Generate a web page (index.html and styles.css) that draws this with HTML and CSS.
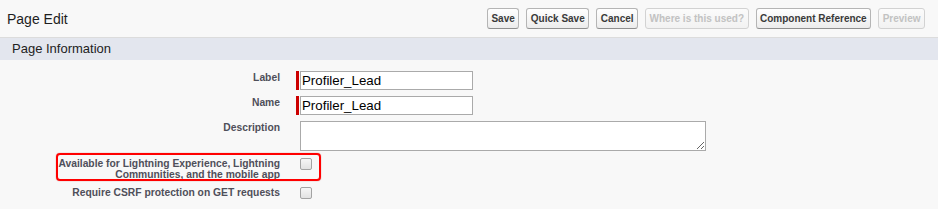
FILE: index.html
```html
<!DOCTYPE html>
<html>
<head>
<meta charset="utf-8">
<title>Page Edit</title>
<link rel="stylesheet" href="styles.css">
</head>
<body>
<div class="page">
  <header class="page-header">
    <h1 class="page-title">Page Edit</h1>
    <div class="btn-row">
      <button class="btn">Save</button>
      <button class="btn">Quick Save</button>
      <button class="btn">Cancel</button>
      <button class="btn" disabled>Where is this used?</button>
      <button class="btn">Component Reference</button>
      <button class="btn" disabled>Preview</button>
    </div>
  </header>
  <div class="section-head">Page Information</div>
  <div class="form">
    <div class="lbl">Label</div>
    <div class="val"><span class="req"></span><input class="txt" type="text" value="Profiler_Lead"></div>

    <div class="lbl">Name</div>
    <div class="val"><span class="req"></span><input class="txt" type="text" value="Profiler_Lead"></div>

    <div class="lbl">Description</div>
    <div class="val plain"><textarea class="area"></textarea></div>

    <div class="lbl">Available for Lightning Experience, Lightning<br>Communities, and the mobile app</div>
    <div class="val plain"><input class="chk" type="checkbox"></div>

    <div class="lbl">Require CSRF protection on GET requests</div>
    <div class="val plain"><input class="chk" type="checkbox"></div>

    <div class="highlight"></div>
  </div>
</div>
</body>
</html>
```

FILE: styles.css
```css
html, body {
  margin: 0;
  padding: 0;
  background: #f8f8f8;
}

body {
  font-family: "Liberation Sans", Arial, sans-serif;
  color: #222;
}

.page {
  width: 938px;
}

.page-header {
  display: flex;
  justify-content: space-between;
  align-items: center;
  height: 37px;
  padding: 0 13px 0 7px;
  border-bottom: 1px solid #dcdcdc;
}

.page-title {
  margin: 0;
  font-size: 14px;
  font-weight: normal;
  line-height: 16px;
  color: #1e1e1e;
}

.btn-row {
  display: flex;
  gap: 7px;
}

.btn {
  height: 21px;
  margin: 0;
  padding: 0 3.5px;
  font-family: "Liberation Sans", Arial, sans-serif;
  font-size: 10px;
  font-weight: bold;
  color: #3a3a3a;
  border: 1px solid #b5b5b5;
  border-bottom-color: #8f8f8f;
  border-radius: 3px;
  background: linear-gradient(#ffffff, #ececec);
}

.btn:disabled {
  color: #c2c2c2;
  border-color: #d2d2d2;
  background: linear-gradient(#fbfbfb, #f2f2f2);
}

.section-head {
  height: 22px;
  line-height: 22px;
  padding-left: 12px;
  font-size: 13px;
  color: #222;
  background: #e3e6ee;
}

.form {
  position: relative;
  display: grid;
  grid-template-columns: 280px 1fr;
  column-gap: 16px;
  row-gap: 6px;
  padding-top: 11px;
}

.lbl {
  text-align: right;
  font-size: 10.3px;
  font-weight: bold;
  line-height: 11px;
  padding-top: 1px;
  color: #4f4f5a;
}

.val {
  display: flex;
  align-items: flex-start;
}

.val.plain {
  padding-left: 4px;
}

.req {
  width: 3px;
  height: 19px;
  margin-right: 1px;
  background: #c00;
}

.txt {
  box-sizing: border-box;
  width: 173px;
  height: 19px;
  margin: 0;
  padding: 0 1px;
  border: 1px solid #aaa;
  background: #fff;
  font-family: "Liberation Sans", Arial, sans-serif;
  font-size: 13.3px;
  color: #000;
  outline: none;
}

.area {
  display: block;
  box-sizing: border-box;
  width: 406px;
  height: 30px;
  margin: 0;
  border: 1px solid #aaa;
  background: #fff;
  outline: none;
}

.chk {
  appearance: none;
  -webkit-appearance: none;
  box-sizing: border-box;
  width: 12px;
  height: 12px;
  margin: 1px 0 0;
  border: 1px solid #a3a3a3;
  border-radius: 2px;
  background: linear-gradient(#f6f6f6, #e2e2e2);
}

.highlight {
  position: absolute;
  left: 56px;
  top: 93px;
  width: 265px;
  height: 28px;
  box-sizing: border-box;
  border: 2px solid #f00;
  border-radius: 4px;
  box-shadow: 0 0 1px rgba(180, 0, 0, 0.7);
  pointer-events: none;
}
```
